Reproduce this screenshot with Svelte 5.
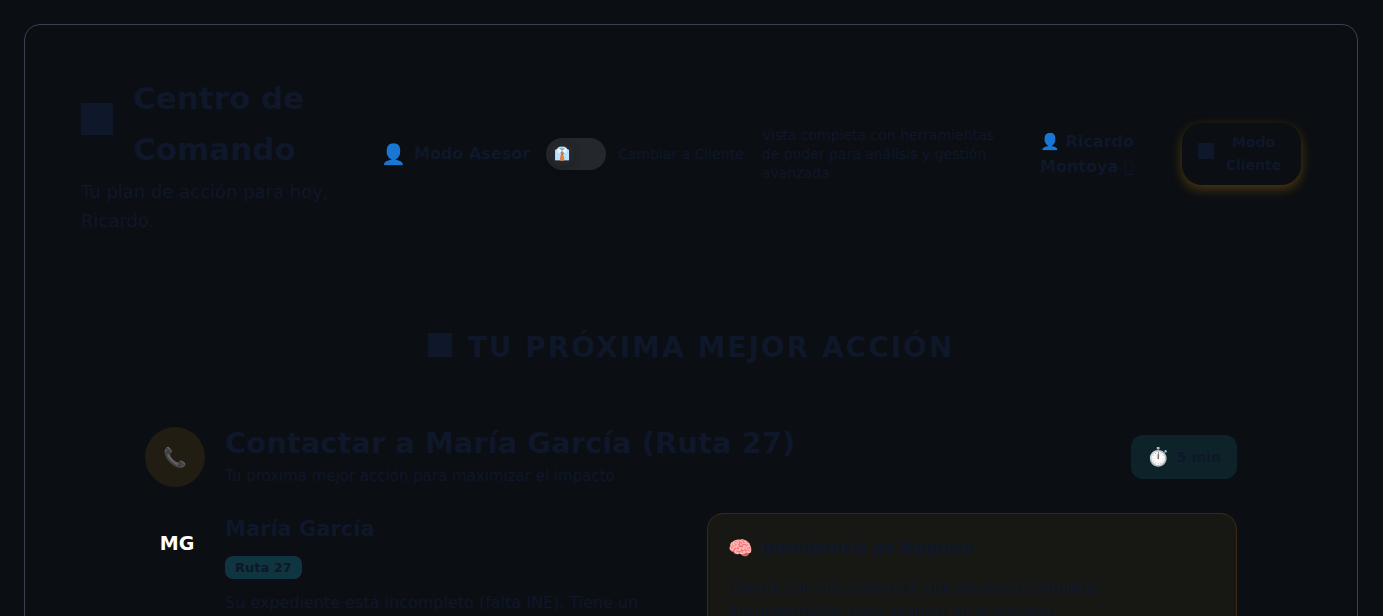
<script>
  let clientMode = $state(false);
</script>

{#snippet square(size)}
  <span class="glyph"><svg width={size} height={size} viewBox="0 0 24 24" aria-hidden="true"><rect width="24" height="24" fill="currentColor" /></svg></span>
{/snippet}

<main class="shell">
  <header>
    <div class="intro">
      <h1>{@render square(32)}<span>Centro de Comando</span></h1>
      <p>Tu plan de acción para hoy, Ricardo.</p>
    </div>
    <div class="mode">
      <div class="current"><span class="emoji">👤</span><strong>Modo Asesor</strong></div>
      <label class="toggle">
        <input type="checkbox" role="switch" bind:checked={clientMode} />
        <span class="track"><span class="thumb">👔</span></span>
        <span>Cambiar a Cliente</span>
      </label>
      <p>Vista completa con herramientas de poder para análisis y gestión avanzada</p>
    </div>
    <div class="user">👤 Ricardo Montoya &#xE000;</div>
    <button class="client">{@render square(16)}<span>Modo Cliente</span></button>
  </header>

  <section>
    <h2>{@render square(24)}<span>TU PRÓXIMA MEJOR ACCIÓN</span></h2>
    <div class="action">
      <div class="call">📞</div>
      <div class="title">
        <h3>Contactar a María García (Ruta 27)</h3>
        <p>Tu próxima mejor acción para maximizar el impacto</p>
      </div>
      <div class="time"><span>⏱️</span><span>5 min</span></div>
    </div>
    <div class="columns">
      <div class="person">
        <div class="avatar">MG</div>
        <div>
          <h4>María García</h4>
          <span class="route">Ruta 27</span>
          <p>Su expediente está incompleto (falta INE). Tiene un</p>
        </div>
      </div>
      <div class="insight">
        <h4><span>🧠</span><span>Inteligencia de Negocio</span></h4>
        <p>Cliente con alto potencial que necesita completar documentación para avanzar en el proceso.</p>
      </div>
    </div>
  </section>
</main>

<style>
  :global(html) { overflow: hidden; background: #0b0e12; }
  :global(body) { margin: 0; }
  * { box-sizing: border-box; }
  h1, h2, h3, h4, p { margin: 0; }
  .shell {
    margin: 24px 25px 24px 24px;
    padding: 48px 56px;
    border: 1px solid #374151;
    border-radius: 16px;
    color: #0f172a;
    font: 16px/26px "DejaVu Sans", sans-serif;
  }
  .glyph { flex: none; }
  header { display: flex; align-items: center; }
  .intro { flex: 0 1 284px; margin-right: 16px; }
  h1 { display: flex; align-items: center; gap: 20px; font-size: 31px; line-height: 51px; }
  .intro p { margin-top: 2px; font-size: 18px; line-height: 29px; }
  .mode { flex: 1; display: flex; align-items: center; gap: 16px; }
  .current, .toggle { display: flex; align-items: center; gap: 8px; white-space: nowrap; }
  .emoji { font-size: 20px; }
  .toggle { position: relative; gap: 12px; font-size: 14px; }
  .toggle input { position: absolute; inset: 0; margin: 0; opacity: 0; }
  .track { width: 60px; height: 32px; padding: 4px; border-radius: 16px; background: #24272b; }
  .thumb {
    display: grid;
    place-items: center;
    width: 24px;
    height: 24px;
    border-radius: 50%;
    font-size: 13px;
    line-height: 22px;
    box-shadow: 0 2px 8px #0003;
  }
  .mode p { flex: 1; padding-left: 2px; font-size: 14px; line-height: 19px; }
  .user { flex: 0 0 110px; margin-left: 32px; font-weight: 700; line-height: 25px; }
  .client {
    display: flex;
    align-items: center;
    gap: 8px;
    width: 119px;
    margin-left: 32px;
    padding: 8px 16px;
    border: 0;
    border-radius: 20px;
    background: #0b0e12;
    color: inherit;
    font: 700 14px/23px "DejaVu Sans", sans-serif;
    box-shadow: 0 4px 12px #f59e0b4d;
  }
  section { padding: 90px 64px 0; }
  h2 { display: flex; justify-content: center; align-items: center; gap: 16px; font-size: 28px; line-height: 45px; letter-spacing: 2px; }
  .action { display: flex; align-items: center; gap: 20px; margin-top: 54px; }
  .call { display: grid; place-items: center; flex: none; width: 60px; height: 60px; border-radius: 50%; background: #221d13; font-size: 19px; }
  .title { flex: 1; }
  h3 { font-size: 29px; line-height: 38px; }
  .title p { font-size: 15px; line-height: 28px; }
  .time { display: flex; align-items: center; gap: 8px; padding: 8px 16px; border-radius: 12px; background: #0d2329; font-size: 14px; font-weight: 700; line-height: 28px; }
  .time span:first-child { font-size: 18px; }
  .columns { display: grid; grid-template-columns: 1fr 1fr; gap: 32px; margin-top: 23px; }
  .person { display: flex; gap: 16px; }
  .avatar { display: grid; place-items: center; flex: none; width: 64px; height: 60px; color: #fff; font-size: 19px; font-weight: 700; }
  .person h4 { font-size: 21px; line-height: 32px; }
  .route { display: inline-block; margin: 11px 0; padding: 2px 10px; border-radius: 8px; background: #0f3540; font-size: 13px; font-weight: 700; line-height: 19px; }
  .insight { padding: 20px; border: 1px solid #3a2a12; border-radius: 16px; background: #171713; }
  .insight h4 { display: flex; align-items: center; gap: 8px; font-size: 16px; line-height: 28px; }
  .insight h4 span:first-child { font-size: 20px; }
  .insight p { margin-top: 14px; font-size: 15px; line-height: 24px; }
</style>
